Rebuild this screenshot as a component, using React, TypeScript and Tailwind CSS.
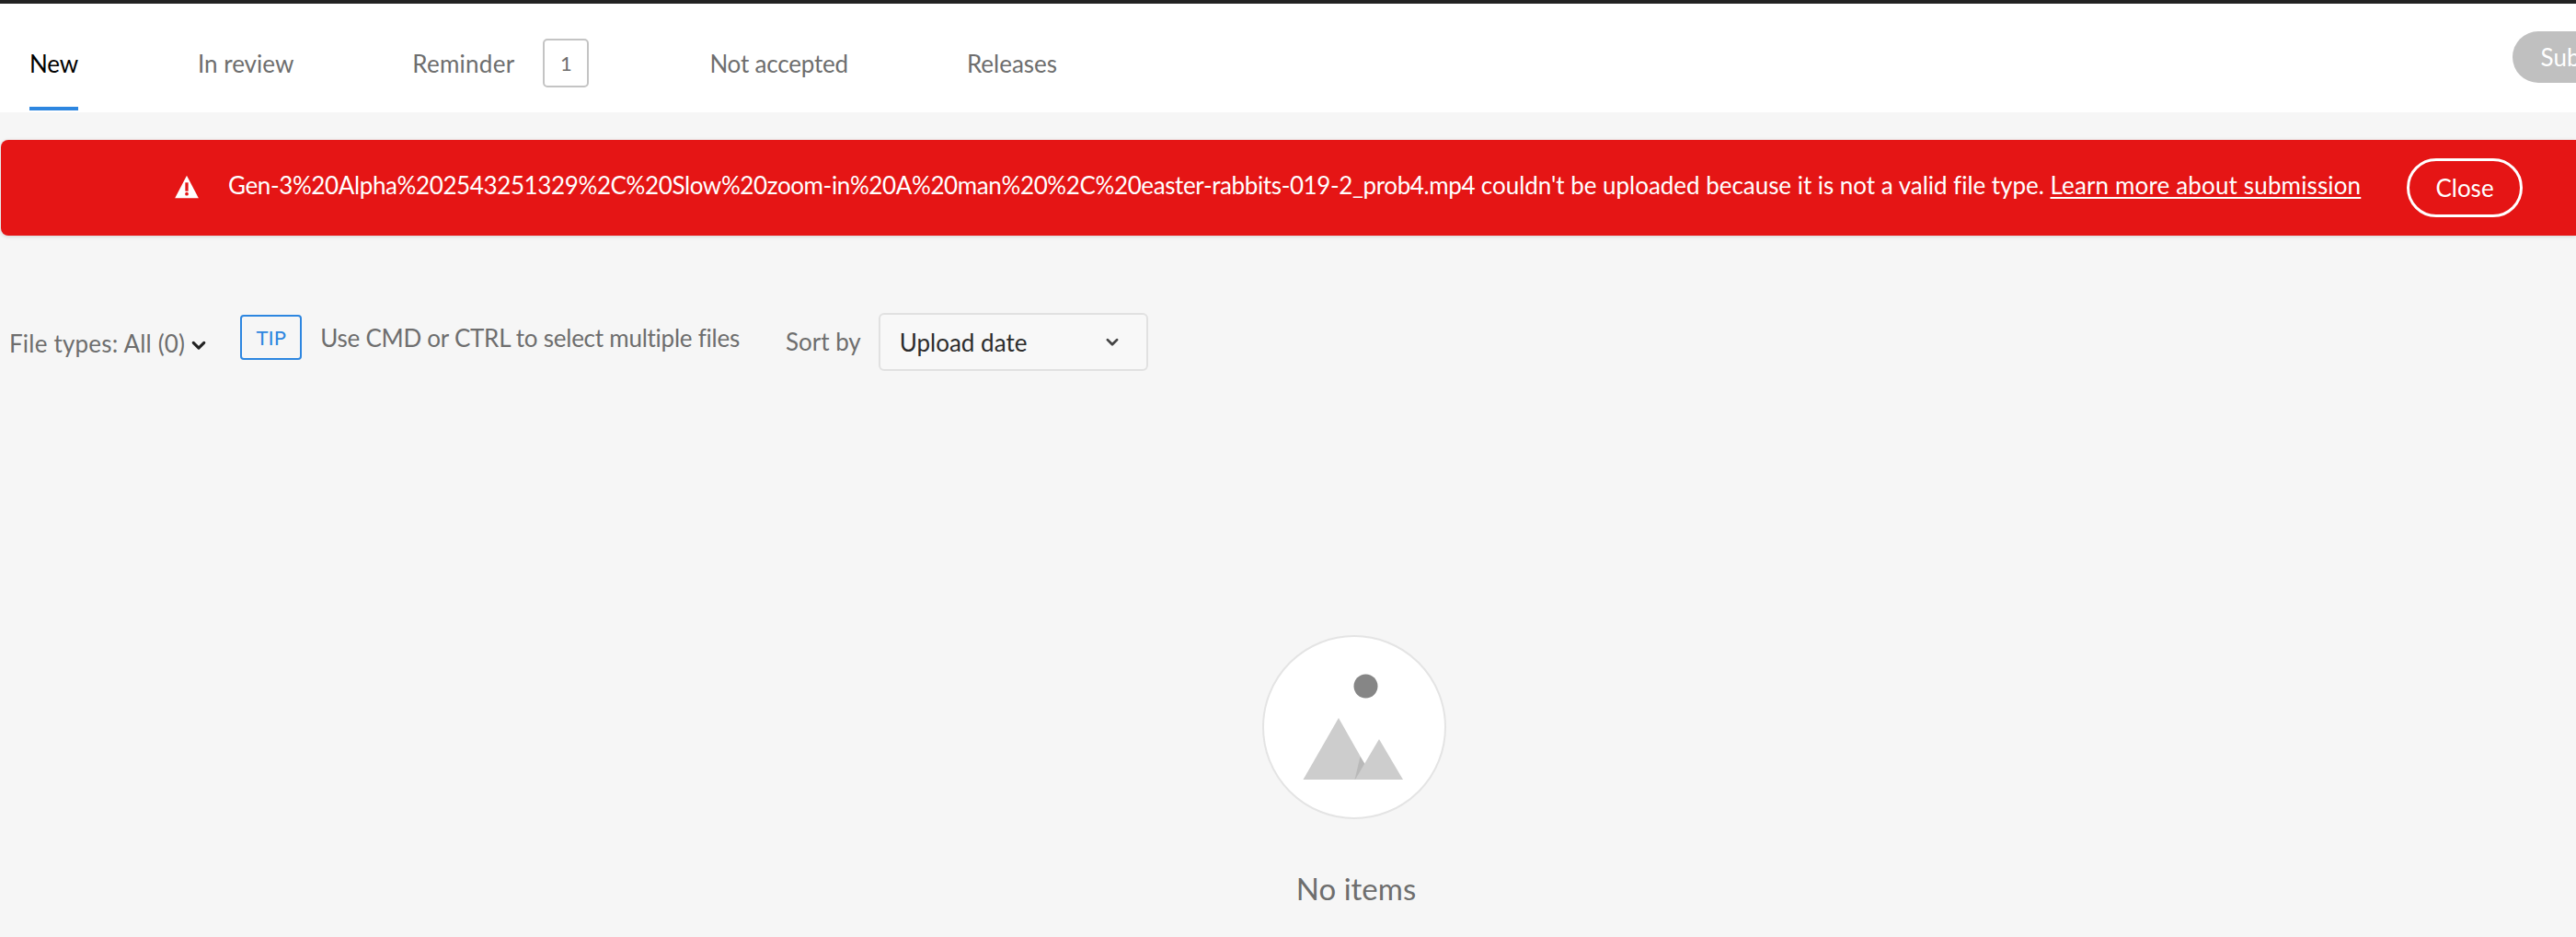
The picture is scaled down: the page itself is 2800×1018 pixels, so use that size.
const tabs = ["In review", "Reminder", "Not accepted", "Releases"]

function Chevron({ className }: { className: string }) {
  return (
    <svg viewBox="0 0 14 10" className={className} fill="none" stroke="currentColor" strokeWidth={2.4} strokeLinecap="round" strokeLinejoin="round">
      <path d="M2.5 2.5 7 7l4.5-4.5" />
    </svg>
  )
}

function Mountains() {
  return (
    <svg viewBox="0 0 200 200" className="w-[200px] h-[200px] shrink-0">
      <circle cx="112.5" cy="55.5" r="13" fill="#868686" />
      <path d="M44.5 157 83 90l38 67z" fill="#cdcdcd" />
      <path d="M100.5 157l6-25 5 8-6 17z" fill="#b9b9b9" />
      <path d="M101 157l26-44 26 44z" fill="#cdcdcd" />
    </svg>
  )
}

export default function App() {
  return (
    <div className="w-[2800px] h-[1018px] overflow-hidden bg-[#f6f6f6] font-['Lato','Noto_Sans',sans-serif]">
      <div className="h-[4px] bg-[#222222]" />
      <header className="w-[2944px] h-[118px] bg-white flex items-start pl-[32px] pr-[72px]">
        <div className="flex items-start">
          <a className="relative h-[118px] w-[53px] pt-[49px] text-[26px] leading-[32px] text-black tracking-[-0.2px]">
            New
            <span className="absolute left-0 right-0 bottom-[2px] h-[4px] bg-[#2d86e0]" />
          </a>
          <a className="ml-[130px] pt-[49px] text-[26px] leading-[32px] text-[#6e6e6e]">{tabs[0]}</a>
          <a className="ml-[129px] pt-[49px] text-[26px] leading-[32px] text-[#6e6e6e] tracking-[0.25px]">{tabs[1]}</a>
          <span className="ml-[31px] mt-[38px] w-[50px] h-[53px] flex items-center justify-center rounded-[5px] border-2 border-[#c4c4c4] text-[22px] text-[#6e6e6e]">1</span>
          <a className="ml-[131px] pt-[49px] text-[26px] leading-[32px] text-[#6e6e6e] tracking-[-0.2px]">{tabs[2]}</a>
          <a className="ml-[129px] pt-[49px] text-[26px] leading-[32px] text-[#6e6e6e]">{tabs[3]}</a>
        </div>
        <button className="ml-auto mt-[30px] w-[141px] h-[56px] rounded-full bg-[#c0c0c0] text-white text-[26px]">Submit</button>
      </header>

      <div className="ml-px mt-[30px] h-[104px] rounded-l-[8px] bg-[#e51515] shadow-[0_1px_4px_rgba(0,0,0,0.15)] flex items-center text-white text-[26px] pl-[188px]">
        <svg viewBox="0 0 24 24" className="w-[28px] h-[28px] mb-[3px]" fill="white">
          <path d="M12 1.5 23 22.5H1z" />
          <rect x="10.6" y="8" width="2.8" height="8" fill="#e51515" />
          <circle cx="12" cy="18.6" r="1.6" fill="#e51515" />
        </svg>
        <p className="ml-[31px] whitespace-nowrap mb-[6px]">
          <span className="tracking-[-0.38px]">Gen-3%20Alpha%202543251329%2C%20Slow%20zoom-in%20A%20man%20%2C%20easter-rabbits-019-2_prob4.mp4</span>
          <span className="tracking-[-0.03px]"> couldn't be uploaded because it is not a valid file type. </span>
          <a className="underline underline-offset-[3px] tracking-[0.15px]">Learn more about submission</a>
        </p>
        <button className="ml-auto mr-[58px] w-[126px] h-[64px] rounded-full border-[3px] border-white text-[26px]">Close</button>
      </div>

      <div className="flex items-start pl-[10px] mt-[84px] text-[#6e6e6e] text-[26px] leading-[32px]">
        <div className="flex items-center mt-[17px]">
          <span className="tracking-[0.2px]">File types: All (0)</span>
          <Chevron className="w-[18px] h-[13px] ml-[6px] mt-[4px] text-[#222222]" />
        </div>
        <span className="ml-[36px] mt-[2px] w-[67px] h-[49px] flex items-center justify-center rounded-[4px] border-2 border-[#2d86e0] text-[#2d86e0] text-[22px]">TIP</span>
        <span className="ml-[20px] mt-[11px] tracking-[-0.25px]">Use CMD or CTRL to select multiple files</span>
        <span className="ml-[50px] mt-[15px]">Sort by</span>
        <div className="ml-[19px] w-[293px] h-[63px] flex items-center pl-[21px] pr-[29px] rounded-[6px] border-2 border-[#e1e1e1] bg-[#f8f8f8] text-[#2c2c2c] text-[26px]">
          Upload date
          <Chevron className="ml-auto w-[16px] h-[12px] text-[#444444]" />
        </div>
      </div>

      <div className="w-[2944px] mt-[287px] flex flex-col items-center">
        <div className="w-[200px] h-[200px] rounded-full bg-white border-2 border-[#e4e4e4] overflow-hidden flex items-center justify-center">
          <Mountains />
        </div>
        <p className="mt-[53px] ml-[4px] text-[33px] leading-[44px] text-[#6e6e6e]">No items</p>
      </div>
    </div>
  )
}
